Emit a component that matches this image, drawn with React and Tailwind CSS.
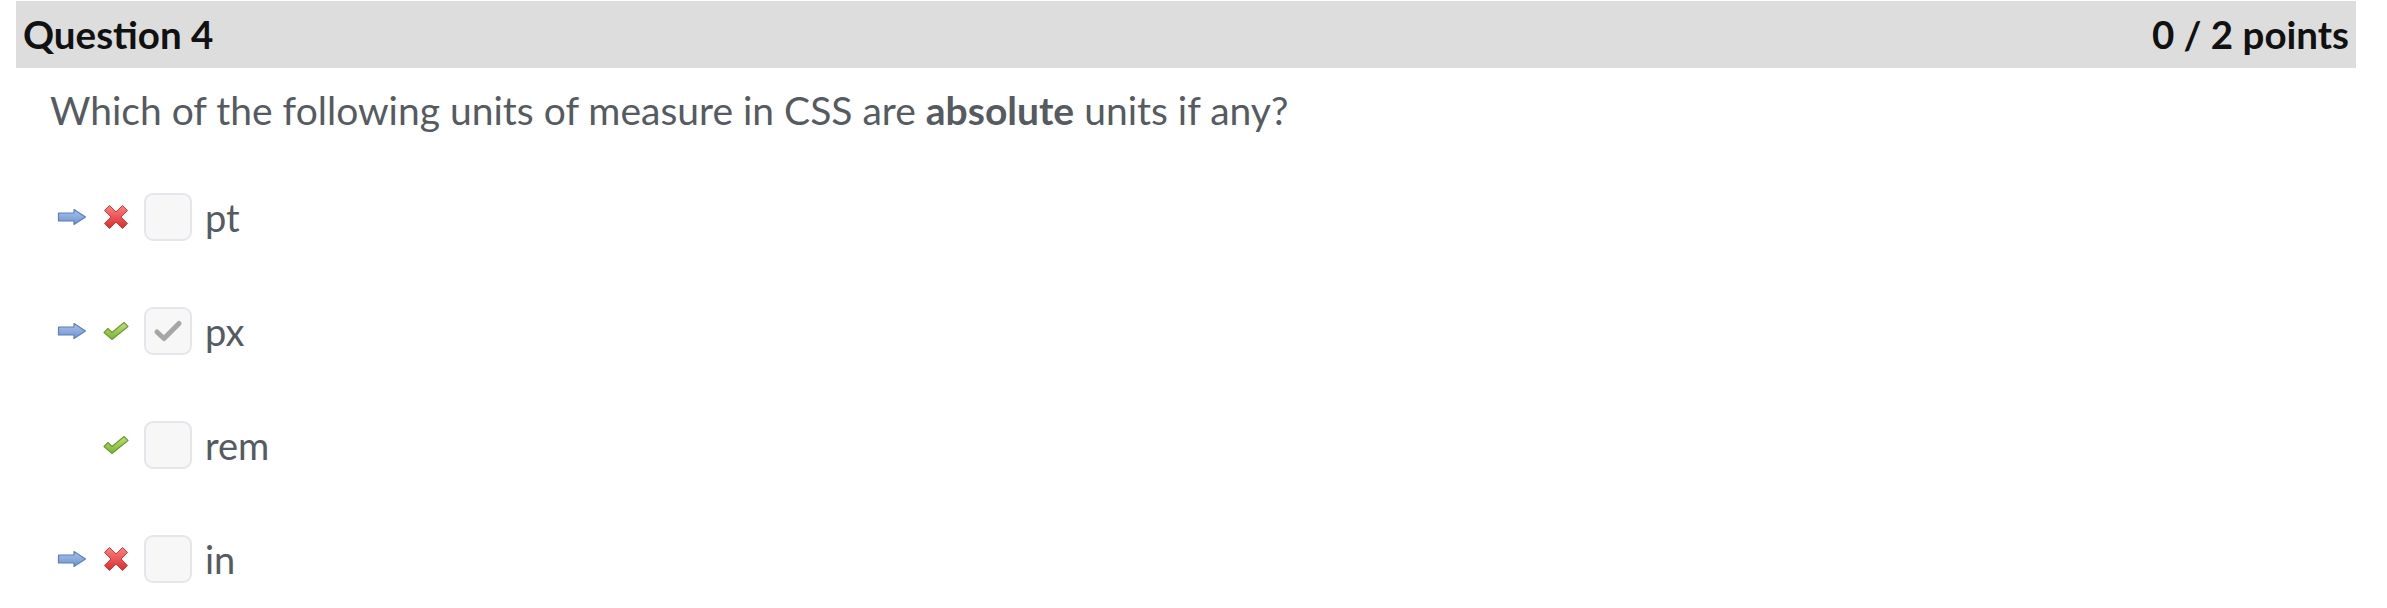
import React from "react";

const Arrow = () => (
  <svg width="30" height="18" viewBox="0 0 30 18">
    <defs>
      <linearGradient id="ag" x1="0" y1="0" x2="0" y2="1">
        <stop offset="0" stopColor="#a9c2ea" />
        <stop offset="1" stopColor="#6f93cf" />
      </linearGradient>
    </defs>
    <path d="M1.5 5 H17 V1.5 L28.5 9 L17 16.5 V13 H1.5 Z" fill="url(#ag)" stroke="#5d7fb9" strokeWidth="1.2" strokeLinejoin="round" />
  </svg>
);

const Cross = () => (
  <svg width="26" height="26" viewBox="0 0 26 26">
    <defs>
      <linearGradient id="xg" x1="0" y1="0" x2="0" y2="1">
        <stop offset="0" stopColor="#ff8080" />
        <stop offset="1" stopColor="#d92c2c" />
      </linearGradient>
    </defs>
    <path d="M1.5 6.5 L6.5 1.5 L13 8 L19.5 1.5 L24.5 6.5 L18 13 L24.5 19.5 L19.5 24.5 L13 18 L6.5 24.5 L1.5 19.5 L8 13 Z" fill="url(#xg)" stroke="#d23a3a" strokeWidth="1" strokeLinejoin="round" />
  </svg>
);

const Tick = () => (
  <svg width="26" height="20" viewBox="0 0 26 20">
    <defs>
      <linearGradient id="tg" x1="0" y1="0" x2="0" y2="1">
        <stop offset="0" stopColor="#bfe27a" />
        <stop offset="1" stopColor="#7bb234" />
      </linearGradient>
    </defs>
    <path d="M1 11.5 L5 7.5 L9 11.5 L21 1.5 L25 5.5 L9 18.5 Z" fill="url(#tg)" stroke="#6d9a2e" strokeWidth="1.1" strokeLinejoin="round" />
  </svg>
);

const Box = ({ checked }) => (
  <div className="w-[48px] h-[48px] rounded-[9px] border-2 border-[#e3e6ea] bg-[#f7f7f7] flex items-center justify-center">
    {checked && (
      <svg width="32" height="26" viewBox="0 0 32 26">
        <path d="M5 14 L12 20.5 L27 5.5" fill="none" stroke="#a6a6a6" strokeWidth="5" strokeLinecap="round" strokeLinejoin="round" />
      </svg>
    )}
  </div>
);

const rows = [
  { arrow: true, mark: "x", checked: false, label: "pt" },
  { arrow: true, mark: "t", checked: true, label: "px" },
  { arrow: false, mark: "t", checked: false, label: "rem" },
  { arrow: true, mark: "x", checked: false, label: "in" },
];

export default function App() {
  return (
    <div className="w-[2387px] h-[608px] bg-white pl-[16px] pr-[31px] pt-[1px]" style={{ fontFamily: "Lato, 'Open Sans', sans-serif" }}>
      <div className="h-[67px] bg-[#dddddd] flex items-center justify-between px-[7px] text-[38.5px] font-bold text-[#111111]">
        <span>Question 4</span>
        <span>0 / 2 points</span>
      </div>
      <div className="pl-[34px]">
        <div className="h-[84px] flex items-center text-[39px] text-[#555b61]">
          <span>
            Which of the following units of measure in CSS are <b className="font-bold">absolute</b> units if any?
          </span>
        </div>
        <div className="flex flex-col mt-[8px]">
          {rows.map((r, i) => (
            <div key={i} className="h-[114px] flex items-center">
              <div className="w-[30px] ml-[7px] flex items-center">{r.arrow && <Arrow />}</div>
              <div className="w-[26px] ml-[16px] flex items-center justify-center">{r.mark === "x" ? <Cross /> : <Tick />}</div>
              <div className="ml-[15px]"><Box checked={r.checked} /></div>
              <span className="ml-[13px] text-[38px] text-[#555b61]">{r.label}</span>
            </div>
          ))}
        </div>
      </div>
    </div>
  );
}
